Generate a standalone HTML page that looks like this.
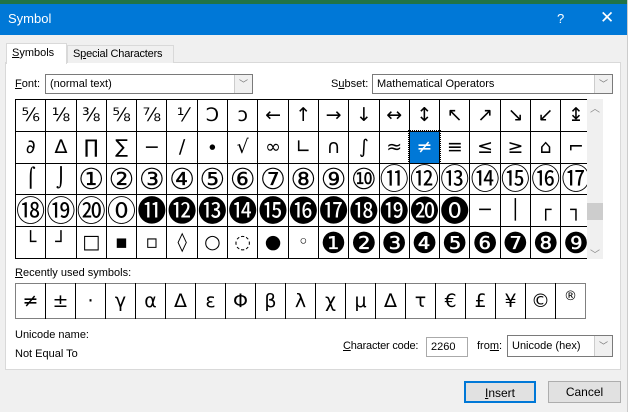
<!DOCTYPE html>
<html><head><meta charset="utf-8"><style>
*{box-sizing:border-box;margin:0;padding:0}
body{width:632px;height:412px;overflow:hidden;background:#fff;font-family:"Liberation Sans","DejaVu Sans",sans-serif;font-size:11px;color:#000;position:relative;white-space:nowrap}
.abs{position:absolute}
#top{left:0;top:0;width:632px;height:5px;background:#217346}
#dlg{left:0;top:4px;width:627px;height:408px;background:#f0f0f0}
#title{left:0;top:4px;width:627px;height:31px;background:#0078d7;color:#fff;font-size:13px}
.tab{top:43px;height:20px;border:1px solid #d9d9d9;border-bottom:none;padding:3px 5px;background:#f0f0f0}
#panel{left:5px;top:62px;width:616px;height:308px;border:1px solid #d9d9d9;background:#fff}
.combo{height:20px;border:1px solid #7a7a7a;background:#fff;padding:3px 4px;font-size:11px}
.dd{position:absolute;right:0;top:0;width:18px;height:18px;border-left:1px solid #ccc;background:#f0f0f0;color:#777;font-size:9px;text-align:center;line-height:18px}
table{border-collapse:collapse;position:absolute}
#grid{left:15px;top:99px;border:1px solid #808080}
#grid td{width:30.3px;height:31.8px;border:1px solid #000;text-align:center;font-family:"DejaVu Sans",sans-serif;font-size:19px;padding:0;line-height:1;overflow:hidden}
#grid td.c{font-size:29px;line-height:28px}
#grid td.sel{background:#0078d7;color:#fff;outline:1px dotted #000}
#recent{left:15px;top:283px;border:1px solid #808080}
#recent td{width:30px;height:35px;border-right:1px solid #000;text-align:center;font-family:"DejaVu Sans",sans-serif;font-size:19px;padding:0}
#recent td:last-child{border-right:none;font-size:13px;vertical-align:top;padding-top:5px}
.btn{top:381px;height:22px;border:1px solid #adadad;background:#e1e1e1;text-align:center;line-height:20px;font-size:12px}
u{text-decoration:underline}
</style></head><body>
<div class="abs" id="top"></div>
<div class="abs" style="left:627px;top:0;width:5px;height:412px;background:#fff;border-left:1px solid #ccc"></div>
<div class="abs" id="dlg"></div>
<div class="abs" id="title"><span class="abs" style="left:8px;top:7px">Symbol</span><span class="abs" style="left:557px;top:7px">?</span><span class="abs" style="left:600px;top:4px;font-size:17px">✕</span></div>
<div class="abs" id="panel"></div>
<div class="abs tab" style="left:6px;width:61px;background:#fff;height:21px;z-index:2"><u>S</u>ymbols</div>
<div class="abs tab" style="left:67px;width:107px;top:45px;height:18px;padding-top:2px;letter-spacing:-0.2px">S<u>p</u>ecial Characters</div>
<div class="abs" style="left:15px;top:78px"><u>F</u>ont:</div>
<div class="abs combo" style="left:45px;top:74px;width:208px">(normal text)<div class="dd">﹀</div></div>
<div class="abs" style="left:331px;top:78px">S<u>u</u>bset:</div>
<div class="abs combo" style="left:372px;top:74px;width:241px">Mathematical Operators<div class="dd">﹀</div></div>
<table id="grid">
<tr><td>⅚</td><td>⅛</td><td>⅜</td><td>⅝</td><td>⅞</td><td>⅟</td><td>Ↄ</td><td>ↄ</td><td>←</td><td>↑</td><td>→</td><td>↓</td><td>↔</td><td>↕</td><td>↖</td><td>↗</td><td>↘</td><td>↙</td><td>↨</td></tr>
<tr><td>∂</td><td>∆</td><td>∏</td><td>∑</td><td>−</td><td>∕</td><td>∙</td><td>√</td><td>∞</td><td>∟</td><td>∩</td><td>∫</td><td>≈</td><td class="sel">≠</td><td>≡</td><td>≤</td><td>≥</td><td>⌂</td><td>⌐</td></tr>
<tr><td>⌠</td><td>⌡</td><td class="c">①</td><td class="c">②</td><td class="c">③</td><td class="c">④</td><td class="c">⑤</td><td class="c">⑥</td><td class="c">⑦</td><td class="c">⑧</td><td class="c">⑨</td><td class="c">⑩</td><td class="c">⑪</td><td class="c">⑫</td><td class="c">⑬</td><td class="c">⑭</td><td class="c">⑮</td><td class="c">⑯</td><td class="c">⑰</td></tr>
<tr><td class="c">⑱</td><td class="c">⑲</td><td class="c">⑳</td><td class="c">⓪</td><td class="c">⓫</td><td class="c">⓬</td><td class="c">⓭</td><td class="c">⓮</td><td class="c">⓯</td><td class="c">⓰</td><td class="c">⓱</td><td class="c">⓲</td><td class="c">⓳</td><td class="c">⓴</td><td class="c">⓿</td><td>─</td><td>│</td><td>┌</td><td>┐</td></tr>
<tr><td>└</td><td>┘</td><td>□</td><td>▪</td><td>▫</td><td>◊</td><td>○</td><td>◌</td><td>●</td><td>◦</td><td class="c">❶</td><td class="c">❷</td><td class="c">❸</td><td class="c">❹</td><td class="c">❺</td><td class="c">❻</td><td class="c">❼</td><td class="c">❽</td><td class="c">❾</td></tr>
</table>
<div class="abs" style="left:587px;top:99px;width:16px;height:160px;background:#f0f0f0"></div>
<div class="abs" style="left:590px;top:100px;color:#888;font-size:10px">︿</div>
<div class="abs" style="left:587px;top:203px;width:16px;height:17px;background:#cdcdcd"></div>
<div class="abs" style="left:590px;top:246px;color:#888;font-size:10px">﹀</div>
<div class="abs" style="left:15px;top:267px"><u>R</u>ecently used symbols:</div>
<table id="recent"><tr><td>≠</td><td>±</td><td>·</td><td>γ</td><td>α</td><td>Δ</td><td>ε</td><td>Φ</td><td>β</td><td>λ</td><td>χ</td><td>μ</td><td>∆</td><td>τ</td><td>€</td><td>£</td><td>¥</td><td>©</td><td>®</td></tr></table>
<div class="abs" style="left:15px;top:329px">Unicode name:</div>
<div class="abs" style="left:15px;top:348px">Not Equal To</div>
<div class="abs" style="left:343px;top:340px;letter-spacing:-0.2px"><u>C</u>haracter code:</div>
<div class="abs combo" style="left:426px;top:337px;width:42px;height:20px;border-color:#aaa">2260</div>
<div class="abs" style="left:477px;top:340px">fro<u>m</u>:</div>
<div class="abs combo" style="left:507px;top:335px;width:106px;height:22px;padding-top:4px">Unicode (hex)<div class="dd" style="height:20px;line-height:20px">﹀</div></div>
<div class="abs btn" style="left:464px;width:72px;border:2px solid #0078d7"><u>I</u>nsert</div>
<div class="abs btn" style="left:548px;width:73px">Cancel</div>
</body></html>
